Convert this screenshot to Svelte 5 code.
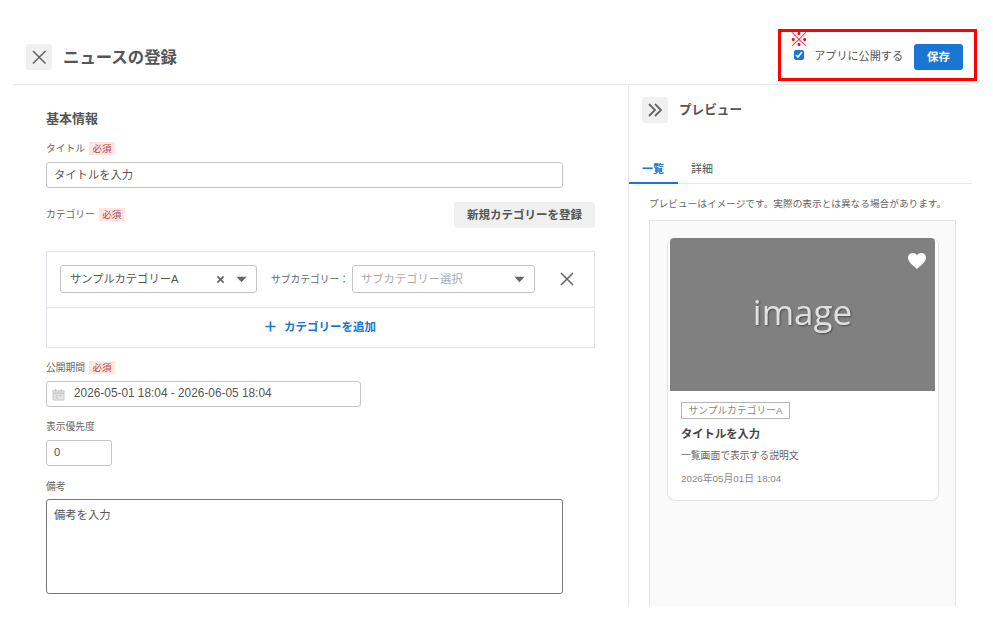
<script>
  const tabs = ['一覧', '詳細'];
</script>

<div class="page">
  <header class="top">
    <button class="icon-btn" aria-label="閉じる">
      <svg viewBox="0 0 26 26"><path d="M7 7l12.500 12.500M19.500 7L7 19.500" /></svg>
    </button>
    <h1>ニュースの登録</h1>
    <label class="publish">
      <input type="checkbox" checked />
      <span>アプリに公開する</span>
    </label>
    <button class="save">保存</button>

    <!-- 赤枠の注釈 -->
    <div class="callout"></div>
    <span class="mark">※</span>
  </header>

  <div class="columns">
    <main class="form">
      <h2>基本情報</h2>

      <div class="label-row first">タイトル <span class="req">必須</span></div>
      <input class="field wide" value="タイトルを入力" />

      <div class="cat-head">
        <div class="label-row">カテゴリー <span class="req">必須</span></div>
        <button class="sub-btn">新規カテゴリーを登録</button>
      </div>

      <div class="cat-box">
        <div class="cat-row">
          <div class="select main-select">
            <span class="val">サンプルカテゴリーA</span>
            <svg class="clear" viewBox="0 0 10 10"><path d="M1.500 1.500l7 7M8.500 1.500l-7 7" /></svg>
            <svg class="caret" viewBox="0 0 12 7"><path d="M0.500 0.500h11L6 6.500z" /></svg>
          </div>
          <span class="sub-label">サブカテゴリー：</span>
          <div class="select sub-select">
            <span class="val placeholder">サブカテゴリー選択</span>
            <svg class="caret" viewBox="0 0 12 7"><path d="M0.500 0.500h11L6 6.500z" /></svg>
          </div>
          <svg class="remove" viewBox="0 0 14 14"><path d="M1 1l12 12M13 1L1 13" /></svg>
        </div>
        <div class="cat-add">
          <svg viewBox="0 0 12 12"><path d="M6 .5v11M.5 6h11" /></svg>
          <span>カテゴリーを追加</span>
        </div>
      </div>

      <div class="label-row period">公開期間 <span class="req">必須</span></div>
      <div class="field date">
        <svg viewBox="0 0 14 14">
          <path class="cal-fill" d="M1 3h12v10H1z" />
          <path class="cal-line" d="M1 5.500h12M4 1v3M10 1v3M4 8h2M8 8h2M4 10.500h2" />
        </svg>
        <span>2026-05-01 18:04 - 2026-06-05 18:04</span>
      </div>

      <div class="label-row prio">表示優先度</div>
      <input class="field num" value="0" />

      <div class="label-row note-label">備考</div>
      <textarea class="memo">備考を入力</textarea>
    </main>

    <aside class="side">
      <div class="side-head">
        <button class="icon-btn" aria-label="閉じる">
          <svg viewBox="0 0 26 26"><path class="thick" d="M7 7l6 6-6 6M13 7l6 6-6 6" /></svg>
        </button>
        <h3>プレビュー</h3>
      </div>

      <div class="tabs">
        {#each tabs as tab, i}
          <span class="tab" class:active={i === 0}>{tab}</span>
        {/each}
      </div>

      <p class="hint">プレビューはイメージです。実際の表示とは異なる場合があります。</p>

      <div class="preview">
        <article class="card">
          <div class="thumb">
            <span class="thumb-text">image</span>
            <svg class="heart" viewBox="0 0 18 16"><path d="M9 16C4 11.600 0 8.600 0 4.800 0 2 2.100 0 4.800 0 6.400 0 8 .8 9 2.200 10 .8 11.600 0 13.200 0 15.900 0 18 2 18 4.800 18 8.600 14 11.600 9 16z" /></svg>
          </div>
          <div class="card-body">
            <span class="tag">サンプルカテゴリーA</span>
            <div class="card-title">タイトルを入力</div>
            <div class="card-desc">一覧画面で表示する説明文</div>
            <div class="card-date">2026年05月01日 18:04</div>
          </div>
        </article>
      </div>
    </aside>
  </div>
</div>

<style>
  :global(body) {
    margin: 0;
    background: #fff;
    font-family: "Liberation Sans", "Noto Sans CJK JP", sans-serif;
    color: #555;
  }

  .page {
    height: 606px;
    margin: 0 21px 0 13px;
    display: flex;
    flex-direction: column;
  }

  .top {
    position: relative;
    height: 85px;
    flex: none;
    box-sizing: border-box;
    padding: 44px 9px 0 13px;
    display: flex;
    align-items: flex-start;
    border-bottom: 1px solid #e8e8ec;
  }

  .icon-btn {
    width: 26px;
    height: 26px;
    padding: 0;
    border: 0;
    border-radius: 3px;
    background: #f0f0f0;
    flex: none;
  }

  .icon-btn svg {
    display: block;
    width: 26px;
    height: 26px;
    fill: none;
    stroke: #666;
    stroke-width: 1.6;
  }

  .icon-btn svg .thick {
    stroke-width: 1.8;
  }

  h1 {
    margin: 0 0 0 11px;
    font-size: 16.400px;
    line-height: 26px;
    font-weight: 700;
    color: #555;
  }

  .publish {
    margin-left: auto;
    display: flex;
    align-items: center;
    height: 22px;
    font-size: 11.100px;
    color: #555;
  }

  .publish input {
    width: 10px;
    height: 10px;
    margin: 0 10px 0 0;
    accent-color: #1976d2;
  }

  .save {
    width: 49px;
    height: 26px;
    margin-left: 11px;
    padding: 0 0 2px;
    border: 0;
    border-radius: 3px;
    background: #1976d2;
    color: #fff;
    font: 700 11.500px "Liberation Sans", "Noto Sans CJK JP", sans-serif;
  }

  .callout {
    position: absolute;
    left: 765px;
    top: 29px;
    width: 199px;
    height: 52px;
    box-sizing: border-box;
    border: 3px solid #f00;
    pointer-events: none;
  }

  .mark {
    position: absolute;
    left: 776px;
    top: 28px;
    font-size: 20px;
    line-height: 24px;
    color: #f00;
  }

  .columns {
    flex: 1;
    min-height: 0;
    overflow: hidden;
    display: grid;
    grid-template-columns: 616px 1fr;
  }

  .form {
    box-sizing: border-box;
    padding: 26px 33px 0;
    border-right: 1px solid #e8e8ec;
  }

  h2 {
    margin: 0;
    font-size: 13px;
    line-height: 16px;
    font-weight: 700;
  }

  .label-row {
    display: flex;
    align-items: center;
    gap: 4px;
    height: 14px;
    font-size: 9.750px;
    color: #666;
  }

  .label-row.first { margin-top: 14px; margin-bottom: 7px; }
  .label-row.period { margin-top: 12px; margin-bottom: 7px; }
  .label-row.prio { margin-top: 12px; margin-bottom: 7px; }
  .label-row.note-label { margin-top: 13px; margin-bottom: 6px; }

  .req {
    display: inline-block;
    width: 26px;
    height: 13px;
    line-height: 13px;
    text-align: center;
    font-size: 9.500px;
    color: #b5473c;
    background: #fde5e2;
  }

  .field {
    display: block;
    box-sizing: border-box;
    height: 26px;
    padding: 0 7px 2px;
    border: 1px solid #c4c4c4;
    border-radius: 3px;
    outline: 0;
    background: #fff;
    font: 11.300px "Liberation Sans", "Noto Sans CJK JP", sans-serif;
    color: #555;
  }

  .wide { width: 517px; }
  .num { width: 66px; }

  .cat-head {
    margin-top: 14px;
    display: flex;
    align-items: center;
    justify-content: space-between;
  }

  .cat-head .label-row {
    margin-bottom: 2px;
  }

  .sub-btn {
    width: 141px;
    height: 26px;
    padding: 0 0 2px;
    border: 0;
    border-radius: 3px;
    background: #f0f0f0;
    color: #555;
    font: 700 11.500px "Liberation Sans", "Noto Sans CJK JP", sans-serif;
  }

  .cat-box {
    margin-top: 23px;
    border: 1px solid #e4e4ea;
  }

  .cat-row {
    display: flex;
    align-items: center;
    height: 56px;
    box-sizing: border-box;
    padding: 0 20px 1px 13px;
    border-bottom: 1px solid #e4e4ea;
  }

  .select {
    box-sizing: border-box;
    height: 28px;
    padding: 0 9px;
    display: flex;
    align-items: center;
    border: 1px solid #c4c4c4;
    border-radius: 3px;
    font-size: 11.300px;
    flex: none;
  }

  .main-select { width: 197px; }
  .sub-select { width: 183px; padding-left: 8px; }

  .val { flex: 1; white-space: nowrap; padding-bottom: 2px; }
  .placeholder { color: #aaa; }

  .clear {
    width: 9px;
    height: 9px;
    margin-right: 11px;
    fill: none;
    stroke: #666;
    stroke-width: 1.800;
  }

  .caret {
    width: 11px;
    height: 7px;
    margin-top: 1px;
    fill: #666;
  }

  .sub-label {
    margin-left: 14px;
    width: 81px;
    flex: none;
    font-size: 9.750px;
    color: #666;
    white-space: nowrap;
    overflow: hidden;
  }

  .remove {
    width: 14px;
    height: 14px;
    margin-left: auto;
    fill: none;
    stroke: #666;
    stroke-width: 1.600;
  }

  .cat-add {
    height: 39px;
    box-sizing: border-box;
    padding-bottom: 3px;
    display: flex;
    align-items: center;
    justify-content: center;
    gap: 8px;
    font-size: 11.500px;
    font-weight: 700;
    color: #1976d2;
  }

  .cat-add svg {
    width: 11px;
    height: 11px;
    fill: none;
    stroke: #1976d2;
    stroke-width: 1.800;
  }

  .date {
    width: 315px;
    display: flex;
    align-items: center;
    gap: 9px;
    padding: 0 5px;
    font-size: 11.850px;
  }

  .date svg {
    width: 13px;
    height: 13px;
    flex: none;
  }

  .date span {
    padding-bottom: 2px;
  }

  .cal-fill { fill: #e2e2e2; stroke: #c8c8c8; stroke-width: 1; }
  .cal-line { fill: none; stroke: #bbb; stroke-width: 1; }

  .memo {
    display: block;
    box-sizing: border-box;
    width: 517px;
    height: 95px;
    padding: 6px 7px;
    border: 1px solid #767676;
    border-radius: 3px;
    outline: 0;
    resize: none;
    font: 11.300px "Liberation Sans", "Noto Sans CJK JP", sans-serif;
    color: #555;
  }

  .side {
    display: flex;
    flex-direction: column;
    min-height: 0;
  }

  .side-head {
    display: flex;
    align-items: center;
    gap: 11px;
    padding: 12px 0 0 13px;
  }

  h3 {
    margin: 0 0 3px;
    font-size: 12.600px;
    font-weight: 700;
    color: #555;
  }

  .tabs {
    margin-top: 32px;
    display: flex;
    height: 29px;
    box-sizing: border-box;
    border-bottom: 1px solid #e8e8ec;
  }

  .tab {
    box-sizing: border-box;
    height: 29px;
    padding: 0 14px 0 13px;
    line-height: 29px;
    font-size: 11px;
    color: #555;
  }

  .tab.active {
    width: 49px;
    font-weight: 700;
    color: #1976d2;
    border-bottom: 2px solid #1976d2;
  }

  .hint {
    margin: 13px 0 0 20px;
    font-size: 9.660px;
    line-height: 14px;
    color: #666;
    white-space: nowrap;
  }

  .preview {
    flex: 1;
    margin: 9px 16px 0 20px;
    box-sizing: border-box;
    padding: 17px 16px 0 17px;
    background: #fafafa;
    border: 1px solid #e5e5e5;
    border-bottom: 0;
  }

  .card {
    box-sizing: border-box;
    height: 263px;
    padding: 0 3px 0 2px;
    background: #fff;
    border: 1px solid #e2e2e2;
    border-top: 0;
    border-radius: 8px;
  }

  .thumb {
    position: relative;
    height: 153px;
    padding-bottom: 7px;
    box-sizing: border-box;
    display: flex;
    align-items: center;
    justify-content: center;
    background: #808080;
    border-radius: 4px 4px 0 0;
  }

  .thumb-text {
    font-family: "Open Sans", sans-serif;
    font-size: 35px;
    color: #e0e0e0;
    text-shadow: 1px 1px 2px rgba(0, 0, 0, 0.4);
    filter: blur(0.6px);
  }

  .heart {
    position: absolute;
    top: 15px;
    right: 9px;
    width: 18px;
    height: 16px;
    fill: #fff;
  }

  .card-body {
    padding: 11px 0 0 11px;
  }

  .tag {
    display: block;
    box-sizing: border-box;
    width: 109px;
    height: 17px;
    line-height: 15px;
    text-align: center;
    font-size: 9.800px;
    color: #888;
    border: 1px solid #b5b5b5;
  }

  .card-title {
    margin-top: 8px;
    font-size: 11.300px;
    line-height: 14px;
    font-weight: 700;
    color: #444;
  }

  .card-desc {
    margin-top: 8px;
    font-size: 9.800px;
    line-height: 14px;
    color: #666;
  }

  .card-date {
    margin-top: 9px;
    font-size: 9.800px;
    line-height: 14px;
    color: #888;
  }
</style>
